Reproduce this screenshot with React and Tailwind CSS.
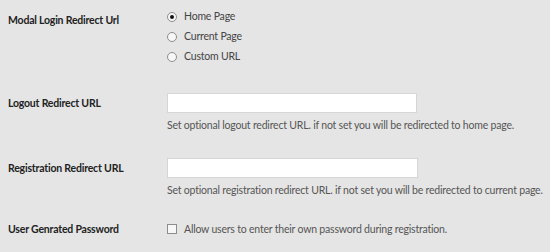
import React from "react";

function Radio({ checked, label }) {
  return (
    <div className="flex items-center h-[20px]">
      <span className="shrink-0 w-[10px] h-[10px] rounded-full border border-[#8c8c8c] bg-[#f7f7f7] flex items-center justify-center">
        {checked && <span className="w-[4px] h-[4px] rounded-full bg-[#111]" />}
      </span>
      <span className="ml-[7px] text-[#444]">{label}</span>
    </div>
  );
}

export default function App() {
  return (
    <div className="w-[550px] h-[252px] bg-[#e5e5e5] font-['Lato',sans-serif] text-[10.5px] tracking-[-0.2px] text-[#444] pt-[7px] overflow-hidden whitespace-nowrap">
      {/* Modal login redirect */}
      <div className="flex">
        <div className="shrink-0 w-[167px] pl-[8px] pt-[3px] leading-[20px] font-bold text-[#222]">Modal Login Redirect Url</div>
        <div>
          <Radio checked label="Home Page" />
          <Radio label="Current Page" />
          <Radio label="Custom URL" />
        </div>
      </div>

      {/* Logout */}
      <div className="flex mt-[26px]">
        <div className="shrink-0 w-[167px] pl-[8px] leading-[20px] font-bold text-[#222]">Logout Redirect URL</div>
        <div>
          <div className="w-[250px] h-[20px] bg-white border border-[#d6d6d6]" />
          <p className="mt-[3px] leading-[18px] text-[#555]">
            Set optional logout redirect URL. if not set you will be redirected to home page.
          </p>
        </div>
      </div>

      {/* Registration */}
      <div className="flex mt-[24px]">
        <div className="shrink-0 w-[167px] pl-[8px] leading-[20px] font-bold text-[#222]">Registration Redirect URL</div>
        <div>
          <div className="w-[251px] h-[20px] bg-white border border-[#d6d6d6]" />
          <p className="mt-[3px] leading-[18px] text-[#555]">
            Set optional registration redirect URL. if not set you will be redirected to current page.
          </p>
        </div>
      </div>

      {/* Password */}
      <div className="flex mt-[20px] leading-[20px]">
        <div className="shrink-0 w-[167px] pl-[8px] font-bold text-[#222]">User Genrated Password</div>
        <div className="flex items-center">
          <span className="shrink-0 w-[10px] h-[10px] border border-[#8c8c8c] bg-[#f7f7f7]" />
          <span className="ml-[7px] text-[#555]">Allow users to enter their own password during registration.</span>
        </div>
      </div>
    </div>
  );
}
